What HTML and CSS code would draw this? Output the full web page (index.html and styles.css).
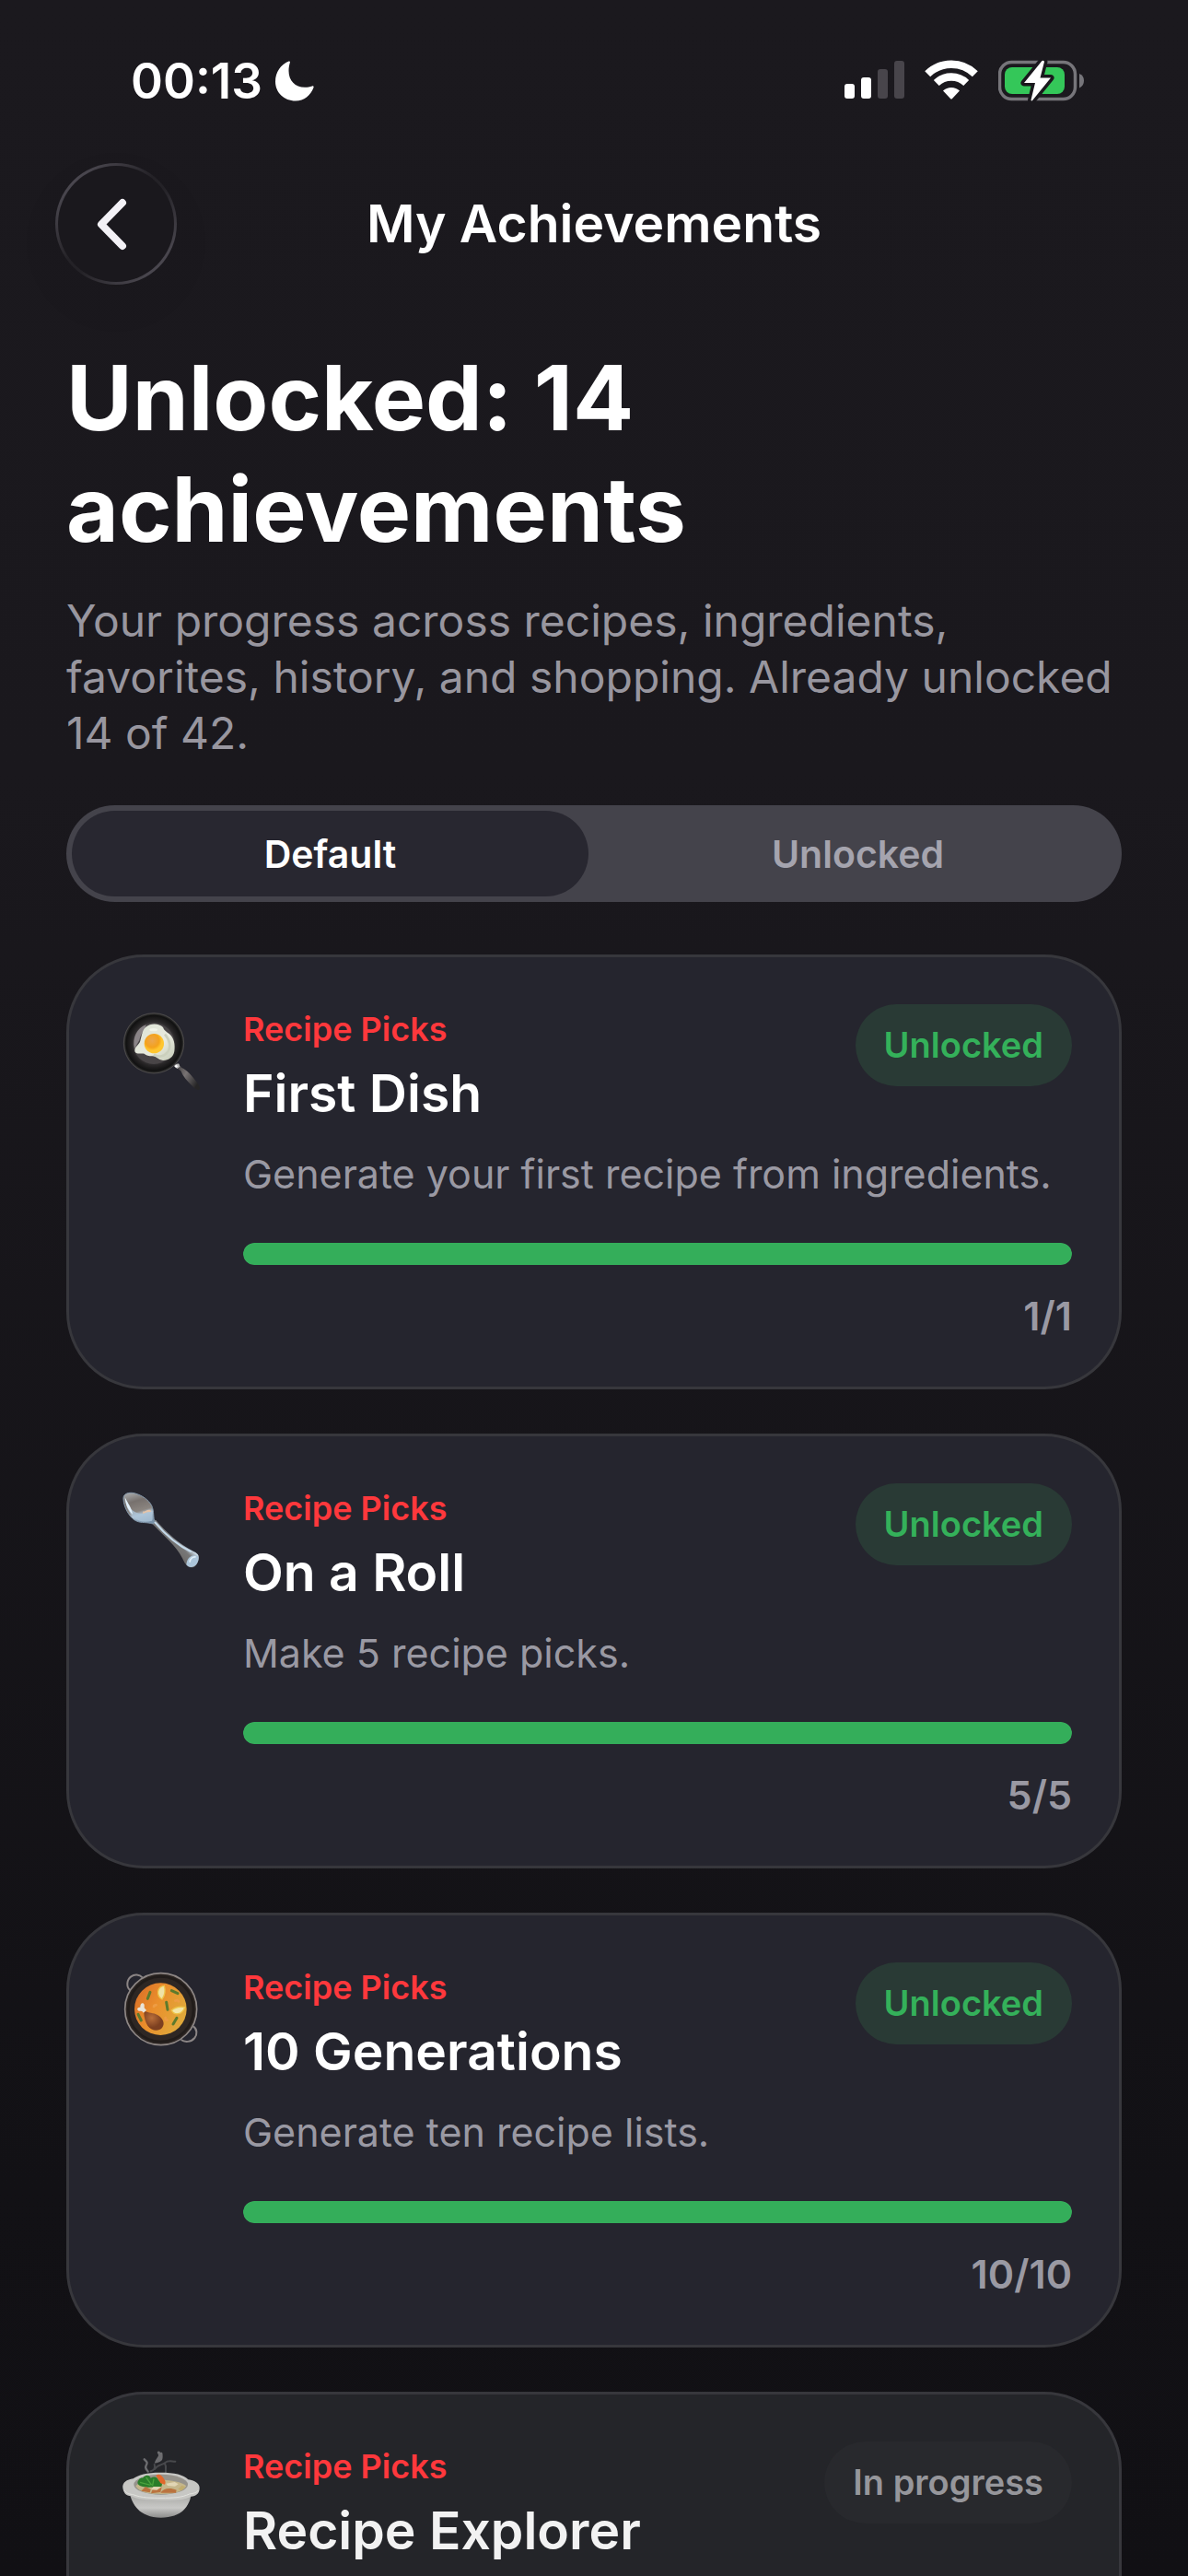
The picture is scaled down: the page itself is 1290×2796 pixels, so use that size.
FILE: index.html
```html
<!DOCTYPE html>
<html lang="en">
<head>
  <meta charset="utf-8">
  <meta name="viewport" content="width=device-width, initial-scale=1">
  <title>My Achievements</title>
  <link rel="stylesheet" href="styles.css">
</head>
<body>
  <div class="app">
    <div class="status-bar">
      <div class="status-time">
        <span>00:13</span>
        <svg width="42" height="44" viewBox="0 0 42 44" fill="#fff"><path d="M14.500 .6c.9-.5 1.700.2 1.400 1.200C15 5 14.500 7.500 14.500 11c0 10.500 7 17.800 17.500 17.800 3 0 5.500-.5 8-1.400 1.200-.4 2 .4 1.500 1.600C38.500 37.500 31 43.500 22 43.500 9.500 43.500 0 34.500 0 22.500 0 12.500 6 4 14.500.6z"/></svg>
      </div>
      <div class="status-icons">
        <svg width="65" height="44" viewBox="0 0 65 44" fill="#fff">
          <rect x="0" y="26" width="11" height="16" rx="3"/>
          <rect x="18" y="19" width="11" height="23" rx="3"/>
          <g fill="#48454b"><rect x="36" y="10" width="11" height="32" rx="3"/><rect x="54" y="1" width="11" height="41" rx="3"/></g>
        </svg>
        <svg width="58" height="44" viewBox="0 0 58 44" fill="none" stroke="#fff" stroke-width="8.500">
          <path d="M3.200 15.200a37 37 0 0 1 51.600 0"/>
          <path d="M12.800 25a23.500 23.500 0 0 1 32.400 0"/>
          <path d="M20 33.500a13 13 0 0 1 18 0L30 42q-1 1-2 0z" fill="#fff" stroke="none"/>
        </svg>
        <svg width="94" height="46" viewBox="0 0 94 46">
          <rect x="1.500" y="2.500" width="82" height="40" rx="13" fill="none" stroke="#76757a" stroke-width="3.500"/>
          <path d="M88 15c3.500 1.200 5 4 5 7.500S91.500 29 88 30.500z" fill="#76757a"/>
          <rect x="7" y="8" width="65" height="29" rx="8" fill="#34c759"/>
          <path d="M47.500 1L28 25h12l-4.500 18.500q.5 2 2 0L57 19.500H45.500L50 2q-.5-2-2.500-1z" fill="#fff" stroke="#1a181d" stroke-width="7" stroke-linejoin="round" paint-order="stroke"/>
        </svg>
      </div>
    </div>

    <header class="nav">
      <button class="back" aria-label="Back">
        <svg width="126" height="126" viewBox="3 3 126 126" fill="none" stroke="#f3f1f6" stroke-width="8" stroke-linecap="round" stroke-linejoin="round"><path d="M73 43L50 66.500 73 90"/></svg>
      </button>
      <div class="nav-title">My Achievements</div>
    </header>

    <main>
      <h1>Unlocked: 14 achievements</h1>
      <p class="intro">Your progress across recipes, ingredients, favorites, history, and shopping. Already unlocked 14 of 42.</p>

      <div class="segments">
        <button class="active" aria-pressed="true">Default</button>
        <button aria-pressed="false">Unlocked</button>
      </div>

      <section class="card">
        <!-- frying pan -->
        <svg class="icon" viewBox="48 72 288 288">
          <defs>
            <radialGradient id="pan"><stop offset=".6" stop-color="#454143"/><stop offset=".74" stop-color="#282627"/><stop offset=".92" stop-color="#111"/><stop offset="1" stop-color="#3a3a39"/></radialGradient>
            <radialGradient id="yolk" cx=".4" cy=".35"><stop offset="0" stop-color="#eca64f"/><stop offset=".7" stop-color="#f4a21c"/><stop offset="1" stop-color="#ffc62e"/></radialGradient>
            <linearGradient id="white" x2="1" y2="1"><stop offset="0" stop-color="#dbe2d5"/><stop offset=".6" stop-color="#e9ebde"/><stop offset="1" stop-color="#c3c9b6"/></linearGradient>
            <linearGradient id="grip" x2="1" y2=".6"><stop offset="0" stop-color="#373536"/><stop offset=".5" stop-color="#777273"/><stop offset="1" stop-color="#262526"/></linearGradient>
          </defs>
          <path d="M238 262l12-9 12 14c18 8 32 24 45 42 14 18 18 25 12 29-6 3-13-2-21-10-18-17-32-32-39-51z" fill="url(#grip)"/>
          <path d="M236 261q8-9 17-7l3 9-9 7z" fill="#bbb"/><circle cx="244" cy="262" r="4" fill="#fff"/>
          <circle cx="171" cy="187" r="98" fill="url(#pan)" stroke="#5b5856" stroke-width="2"/>
          <circle cx="171" cy="188" r="67" fill="#494547"/>
          <path d="M108 205c-8-36 9-69 38-78-4 19-17 28-22 50z" fill="#8a8487"/>
          <path d="M147 133c12-12 42-12 54 2 3 10 10 13 21 22 15 13 19 35 16 56-3 19-18 30-37 30-17-1-19-14-35-14-12-1-18-1-26-8-13-2-31 4-31-11 0-13 15-18 18-31 5-16 7-38 20-46z" fill="url(#white)"/>
          <path d="M207 158c17 19 21 43 9 58-12 16-31 17-45 8" fill="none" stroke="#cbd0bd" stroke-width="8"/>
          <ellipse cx="170" cy="143" rx="13" ry="5" fill="#f1f4e9"/>
          <circle cx="172" cy="188" r="32" fill="url(#yolk)"/>
        </svg>
        <div class="card-body">
          <div class="card-head">
            <div>
              <div class="category">Recipe Picks</div>
              <h2>First Dish</h2>
            </div>
            <span class="badge done">Unlocked</span>
          </div>
          <p class="description">Generate your first recipe from ingredients.</p>
          <progress value="1" max="1" aria-label="First Dish"></progress>
          <div class="count">1/1</div>
        </div>
      </section>

      <section class="card">
        <!-- spoon -->
        <svg class="icon" viewBox="48 72 288 288">
          <defs>
            <linearGradient id="bowl" x1=".2" x2=".5" y2="1"><stop offset="0" stop-color="#a6a7a8"/><stop offset=".3" stop-color="#77716e"/><stop offset=".62" stop-color="#8b8580"/><stop offset=".75" stop-color="#b5c8d9"/><stop offset="1" stop-color="#7892a9"/></linearGradient>
            <linearGradient id="stem" x1="0" y1="1" x2="1" y2="0"><stop offset=".3" stop-color="#65615f"/><stop offset=".53" stop-color="#777"/><stop offset=".62" stop-color="#cfdfec"/></linearGradient>
          </defs>
          <path d="M160 186l17-7c35 40 72 76 124 103 18 8 19 18 14 32-6 18-17 23-29 18-12-5-16-17-22-28-18-39-62-74-104-118z" fill="url(#stem)"/>
          <path d="M277 325c2-22 17-36 37-28 7 12-2 29-13 34-9 5-20 1-24-6z" fill="#acc5da"/>
          <path d="M288 317c1-11 10-19 20-17" fill="none" stroke="#e1eff8" stroke-width="5"/>
          <path d="M72 111c-1-14 10-21 28-20 24 3 48 18 60 35 13 18 8 39 13 56 2 9-4 11-13 8-19-4-35 0-51-10-19-12-36-43-37-69z" fill="url(#bowl)" stroke="#8397aa" stroke-width="3"/>
          <path d="M78 109c9 31 29 54 62 49 9-7 17-7 26-7-2 17 4 25-1 31-22 6-44 3-60-12-17-16-26-38-27-61z" fill="#adc4d8" opacity=".8"/>
          <path d="M77 106c2 25 11 42 25 55-3-20-12-31-19-44z" fill="#e4f1fb"/>
          <path d="M136 151c7 4 10-7 24-4l3 6c-14-1-21 4-28 6z" fill="#e5c4a9"/>
          <path d="M174 186c27 32 66 72 119 97" fill="none" stroke="#c5daeb" stroke-width="6"/>
        </svg>
        <div class="card-body">
          <div class="card-head">
            <div>
              <div class="category">Recipe Picks</div>
              <h2>On a Roll</h2>
            </div>
            <span class="badge done">Unlocked</span>
          </div>
          <p class="description">Make 5 recipe picks.</p>
          <progress value="5" max="5" aria-label="On a Roll"></progress>
          <div class="count">5/5</div>
        </div>
      </section>

      <section class="card">
        <!-- paella pan -->
        <svg class="icon" viewBox="48 72 288 288">
          <defs>
            <linearGradient id="stew" x2="1" y2=".5"><stop offset="0" stop-color="#d86a26"/><stop offset=".5" stop-color="#ea8f2c"/><stop offset="1" stop-color="#e0a83a"/></linearGradient>
            <radialGradient id="drum" cx=".4" cy=".35"><stop offset="0" stop-color="#b96f3b"/><stop offset="1" stop-color="#7d4020"/></radialGradient>
          </defs>
          <g fill="none" stroke="#8b8585" stroke-width="6">
            <path d="M94 151c-14-12-11-35 3-45 11-8 27-7 37 3"/>
            <path d="M299 268c14 8 14 27 5 38-12 14-32 15-44 6"/>
          </g>
          <circle cx="194" cy="212" r="117" fill="#2e2724" stroke="#8e8785" stroke-width="5"/>
          <circle cx="194" cy="212" r="106" fill="none" stroke="#211c1a" stroke-width="8"/>
          <circle cx="193" cy="212" r="85" fill="url(#stew)"/>
          <g fill="none" stroke="#5d7a2c" stroke-width="9" stroke-linecap="round">
            <path d="M159 157l-8 21M229 152l20 9M212 190l4 24M120 229l10 20M246 241l-12 20"/>
          </g>
          <g fill="none" stroke="#ee9c44" stroke-width="8" stroke-linecap="round">
            <path d="M171 204q1-6 8-5M209 240q-2 8 6 8M241 185q8-4 11 2"/>
          </g>
          <path d="M205 136c-24 3-27 32-7 44 8-12 12-28 7-44z" fill="#efe3a6" stroke="#eec449" stroke-width="4"/>
          <path d="M229 216c8 17 34 16 43-10-17-3-33 1-43 10z" fill="#f3e6a9" stroke="#eec449" stroke-width="4"/>
          <path d="M143 219l-4 5c0 14 5 31 12 42 13 18 36 19 47 7 12-15 1-33-15-42-12-7-31-7-40-12z" fill="url(#drum)"/>
          <path d="M147 216l-10 8c-4-8-11-2-17-7-6-7 0-11 7-11-1-9 4-15 9-13 6 3 4 10 4 15z" fill="#e9e4da"/>
        </svg>
        <div class="card-body">
          <div class="card-head">
            <div>
              <div class="category">Recipe Picks</div>
              <h2>10 Generations</h2>
            </div>
            <span class="badge done">Unlocked</span>
          </div>
          <p class="description">Generate ten recipe lists.</p>
          <progress value="10" max="10" aria-label="10 Generations"></progress>
          <div class="count">10/10</div>
        </div>
      </section>

      <section class="card locked">
        <!-- soup bowl -->
        <svg class="icon" viewBox="48 72 288 288">
          <defs>
            <linearGradient id="china" y2="1" x2="0"><stop offset="0" stop-color="#a5a5a2"/><stop offset=".6" stop-color="#c8c8c6"/><stop offset="1" stop-color="#8c8c8b"/></linearGradient>
          </defs>
          <g fill="none" stroke="#b5b5b7" stroke-linecap="round" opacity=".5">
            <path d="M140 118c8 8 12 10 6 20s4 14 6 20" stroke-width="7"/>
            <path d="M187 96c10 12-3 18-7 29 13-2 17-5 15-25" stroke-width="9"/>
            <path d="M174 150c9-15 24-13 34-21 10-9 20-4 33-4M207 132c10 18-5 25 7 42M161 157c11-3 16-10 12-22" stroke-width="6" opacity=".5"/>
          </g>
          <path d="M92 228c9 37 31 79 102 80 69-1 93-36 100-80z" fill="url(#china)"/>
          <path d="M70 211c-2-17 13-27 34-30 15-12 45-20 88-20 47 0 77 7 91 23 24 4 38 14 37 29-1 17-11 25-28 26-21 11-49 12-97 12-49 0-77-2-98-13-17 0-25-12-27-27z" fill="#c7c7c4"/>
          <path d="M76 220c8 11 17 11 28 13 27 11 60 11 91 11 38 0 67-1 92-13 14-2 24-4 29-12" fill="none" stroke="#e3e3df" stroke-width="3"/>
          <ellipse cx="194" cy="200" rx="88" ry="33" fill="#96938c"/>
          <path d="M112 205c23-26 136-27 165 0-12 23-52 26-81 26-35 0-73-3-84-26z" fill="#c5b68b"/>
          <path d="M121 187c5-12 17-5 17-12 12-10 21-3 23 4 12-7 23-2 25 7 15 6 13 15 9 22-19-2-41 4-60-1-14-2-21-11-14-20z" fill="#2a7d2a"/>
          <path d="M126 193l34 9M146 177l18 25M171 182l-4 22" stroke="#4ca33e" stroke-width="4"/>
          <path d="M178 171c8-6 15-4 21 4 7 9 13 17 8 25l-14-4z" fill="#e2682c"/>
          <path d="M130 221l14-14 17 9-3 10zM162 229l6-16 29-5-4 17zM193 227c8-16 33-18 52-9l-2 9z" fill="#ba733f"/>
          <path d="M162 217l8-10 27 1-16 10zM211 197l28-5 12 7-11 7-24-2z" fill="#e1d5b4"/>
          <path d="M250 216l12-13 12 5-12 12z" fill="#c1ad6f"/>
        </svg>
        <div class="card-body">
          <div class="card-head">
            <div>
              <div class="category">Recipe Picks</div>
              <h2>Recipe Explorer</h2>
            </div>
            <span class="badge">In progress</span>
          </div>
        </div>
      </section>
    </main>
  </div>
</body>
</html>
```
FILE: styles.css
```css
* {
  box-sizing: border-box;
}
body {
  margin: 0;
  font-family: Inter, "Noto Sans", sans-serif;
  color: #fff;
  background: #111014;
}
svg {
  display: block;
  flex: none;
}
button {
  margin: 0;
  padding: 0;
  border: none;
  font-family: inherit;
  color: inherit;
}
h1, h2, p {
  margin: 0;
}
.app {
  height: 100vh;
  overflow: hidden;
  background: linear-gradient(#1b191e, #1a181d 30%, #121115 85%, #111014);
}

/* status bar */
.status-bar {
  display: flex;
  justify-content: space-between;
  align-items: flex-start;
  height: 177px;
  padding: 65px 112px 0 142px;
}
.status-time {
  display: flex;
  align-items: center;
  gap: 14px;
  font-size: 53px;
  line-height: 46px;
  font-weight: 600;
}
.status-icons {
  display: flex;
  gap: 22px;
}

/* navigation */
.nav {
  display: grid;
  grid-template-columns: 132px 1fr 132px;
  align-items: center;
  padding: 0 60px;
}
.back {
  width: 132px;
  height: 132px;
  border: 3px solid transparent;
  border-radius: 50%;
  background:
    linear-gradient(#1a181d, #1a181d) padding-box,
    linear-gradient(135deg, #4a474f 15%, #242227 45%, #242227 55%, #4a474f 85%) border-box;
  box-shadow: 0 20px 50px rgba(0, 0, 0, 0.05);
}
.nav-title {
  text-align: center;
  font-size: 57px;
  line-height: 72px;
  font-weight: 600;
}

main {
  padding: 62px 72px 0;
}
h1 {
  font-size: 98px;
  line-height: 121px;
  font-weight: 700;
}
.intro {
  margin-top: 30px;
  font-size: 48px;
  line-height: 61px;
  color: #98969f;
}

/* segmented control */
.segments {
  display: grid;
  grid-template-columns: 1fr 1fr;
  gap: 12px;
  margin: 48px 0 57px;
  padding: 6px;
  height: 105px;
  border-radius: 53px;
  background: #44434b;
}
.segments button {
  border-radius: 47px;
  background: none;
  font-size: 41px;
  font-weight: 600;
  color: #a5a4ae;
}
.segments .active {
  background: #282730;
  color: #fff;
}

/* achievement cards */
.card {
  display: flex;
  gap: 42px;
  min-height: 472px;
  margin-bottom: 48px;
  padding: 51px;
  border: 3px solid #37373c;
  border-radius: 84px;
  background: #25252e;
}
.card.locked {
  background: #242529;
}
.icon {
  width: 96px;
  height: 96px;
  margin-top: 4px;
}
.card-body {
  flex: 1;
}
.card-head {
  display: flex;
  justify-content: space-between;
  align-items: flex-start;
}
.category {
  font-size: 36px;
  line-height: 54px;
  font-weight: 600;
  color: #ff383c;
}
h2 {
  margin-top: 7px;
  font-size: 57px;
  line-height: 72px;
  font-weight: 600;
}
.badge {
  padding: 0 31px;
  border-radius: 45px;
  background: #28292d;
  font-size: 38px;
  line-height: 89px;
  font-weight: 600;
  color: #96969b;
}
.badge.done {
  background: #293a35;
  color: #34b15a;
}
.description {
  margin-top: 24px;
  font-size: 43px;
  line-height: 54px;
  color: #9a99a3;
}
progress {
  display: block;
  width: 100%;
  height: 24px;
  margin-top: 48px;
  border: none;
  border-radius: 12px;
  overflow: hidden;
  appearance: none;
  background: #37373f;
}
progress::-webkit-progress-bar {
  background: #37373f;
}
progress::-webkit-progress-value {
  border-radius: 12px;
  background: #34ae5a;
}
.count {
  margin-top: 30px;
  font-size: 43px;
  line-height: 50px;
  font-weight: 600;
  text-align: right;
  color: #9a99a3;
}
.locked h2 {
  color: #f2f2f2;
}
```
